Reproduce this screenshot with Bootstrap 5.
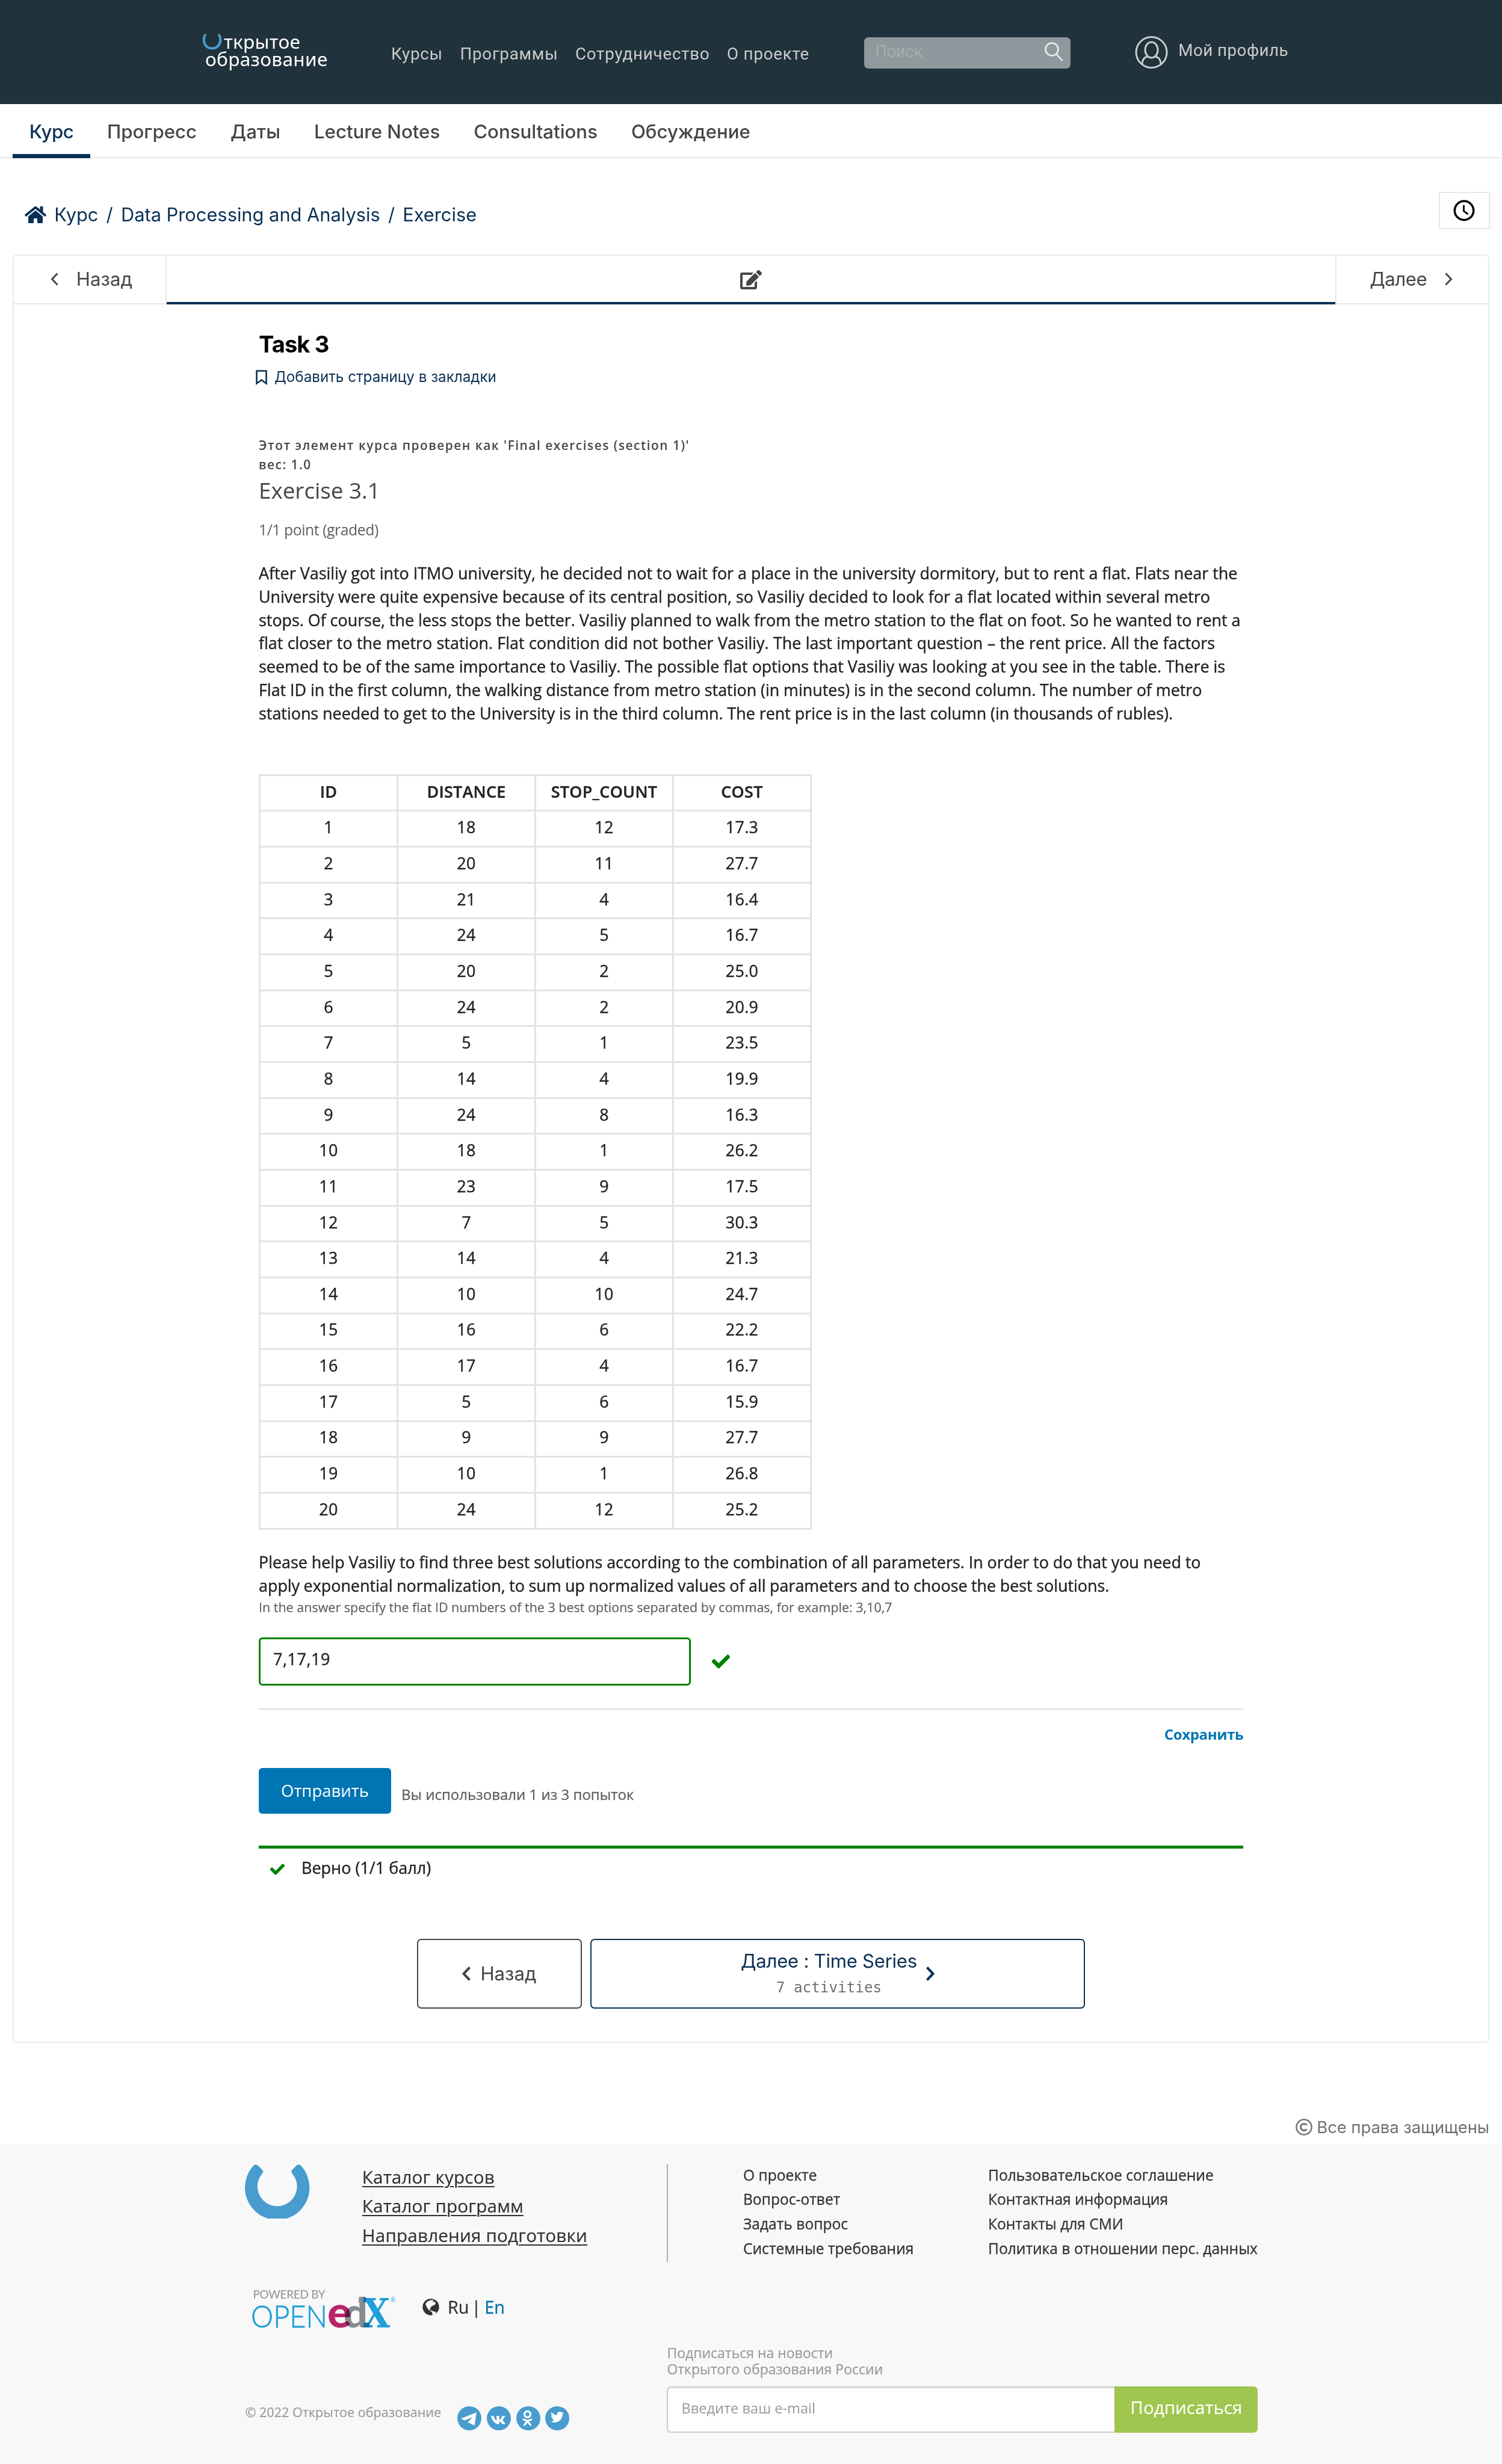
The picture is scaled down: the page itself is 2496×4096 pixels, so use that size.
<!DOCTYPE html>
<html lang="ru">
<head>
<meta charset="utf-8">
<title>Task 3 | Открытое образование</title>
<link rel="stylesheet" href="https://cdn.jsdelivr.net/npm/bootstrap@5.3.0/dist/css/bootstrap.min.css">
<style>
body{width:2496px;height:4096px;overflow:hidden;background:#fff;color:#222;font-family:"Open Sans","Noto Sans",sans-serif;white-space:nowrap}
a{text-decoration:none;color:inherit}
svg{display:block;flex:none}
p,h1,h2,h3{margin:0}
.ui{font-family:Inter,Roboto,sans-serif}
.site-head{height:173.3px;background:#20323c;font-family:Roboto,sans-serif;font-size:27.7px;color:#ccc;line-height:36px;padding-left:337px}
.brand-box{width:212px;margin-top:56px;color:#fff;font:400 31.5px/30px "Noto Sans",sans-serif;letter-spacing:.35px}
.brand-l1{margin-left:3px;margin-top:-2px}
.brand-l2{padding-left:4px;margin-top:-1px}
.head-nav{margin:71.5px 0 0 101px;gap:28.5px;letter-spacing:.8px}
.find-box{margin:62.4px 0 0 auto;width:343px;height:52px;background:#8f989d;border-radius:7px;color:#a6adac;padding:0 12px 5px 18px;letter-spacing:-.5px}
.prof{margin:60px 355px 0 107px;gap:17px;letter-spacing:.5px}
.prof span{margin-top:6px}
.tabs-bar{height:90.2px;border-bottom:2px solid #e7e8e9;padding-left:20.8px;font-size:31.2px;font-weight:500;color:#454545}
.tabs-bar a{height:90.2px;line-height:92px;padding:0 28px}
.tabs-bar a.on{width:129.2px;color:#0a3055;border-bottom:7px solid #0a3055;letter-spacing:-.5px}
.crumb-row{height:159.5px;padding:0 20.5px 0 41px;color:#0a3055;font-size:30.8px;line-height:40px}
.crumbs{margin-top:74px;gap:13.2px}
.clock-box{margin-top:55.5px;width:84.5px;height:62px;border:2px solid #e9e6e4}
.sheet{margin:0 20.8px;height:2973.5px;border:2px solid #eaeaea;border-radius:7px}
.seq{height:81px;font-size:31.2px;color:#454545;line-height:79px}
.seq-end{width:252px;border-bottom:2px solid #eae6e5}
.seq-prev{padding-left:61px;gap:30px}
.seq-next{padding-left:55px;gap:30px;letter-spacing:-.5px}
.seq-mid{border:solid #eae6e5;border-width:0 2px;position:relative}
.seq-mid::after{content:"";position:absolute;left:0;right:0;bottom:0;height:3.5px;background:#0a3055}
.unit{margin-left:407.2px;width:1636.5px}
.unit-h{font-size:38.1px;line-height:50px;font-weight:700;color:#000;margin-top:41px;letter-spacing:-.9px}
.bm{margin:13.500px 0 0 -5px;font-size:24.2px;line-height:34px;color:#0a3055;gap:12px}
.graded{margin-top:80.500px;font-size:20.8px;line-height:31.6px;font-weight:600;color:#454545;letter-spacing:1.54px}
.prob-h{margin-top:3px;font-size:36.8px;line-height:48px;color:#454545;font-weight:400}
.pts{margin-top:25px;font-size:24.7px;line-height:34px;color:#5e5e5e;letter-spacing:-.4px}
.txt{font-size:26.9px;line-height:38.75px;color:#222;-webkit-text-stroke:.4px #222}
.txt-a{margin-top:36px}
.txt-b{margin-top:35.5px}
.ws-p{word-spacing:.37px}
.ws-m{word-spacing:-.12px}
.ws-n{word-spacing:-.5px}
.flats{margin-top:81.400px;width:919px;height:1256px;table-layout:fixed;border-collapse:collapse;font-size:26.9px;line-height:36px;text-align:center;letter-spacing:.3px;-webkit-text-stroke:.4px #222}
.flats td,.flats th{border:3.5px solid #e3e3e3;padding:0 0 5px;text-align:center;height:59.64px;vertical-align:middle}
.flats th{font-weight:600}
.hint{margin-top:2px;font-size:21.5px;line-height:28px;color:#5e5e5e;-webkit-text-stroke:.2px}
.ans-row{margin-top:36.500px;gap:35px}
.ans{width:718px;height:79.5px;border:3.5px solid #008100;border-radius:6px;padding:0 0 7px 21px;font-size:26.9px;letter-spacing:.6px;-webkit-text-stroke:.4px #222}
.rule{margin-top:38px;height:2px;background:#ddd}
.save{margin-top:24px;font-size:24px;line-height:34px;font-weight:700;color:#0075b4;letter-spacing:-.35px}
.send-row{margin-top:39px}
.send{width:220px;height:76.5px;background:#0075b4;color:#fff;border-radius:6px;font-size:27.5px}
.tries{font-size:24px;line-height:34px;color:#5e5e5e;margin:12px 0 0 17px;-webkit-text-stroke:.3px #5e5e5e}
.okline{margin-top:52.5px;height:5px;background:#008100}
.verdict{margin-top:12.7px;padding-left:19px;gap:28px;font-size:27px;line-height:38px;-webkit-text-stroke:.4px #222}
.verdict svg{margin-top:5px}
.pager{margin:99.3px 0 0 263px;gap:14px;font-size:31.2px;line-height:40px;letter-spacing:-.3px}
.pg{height:116px;border:2px solid #454545;border-radius:7px;color:#454545}
.pg-prev{width:274px;gap:16px;letter-spacing:0}
.pg-next{width:822px;border-color:#0a3055;color:#0a3055;gap:15px}
.acts{font:24.3px/36px "DejaVu Sans Mono",monospace;color:#707070;margin-top:5.6px;letter-spacing:0}
.rights{margin:120.9px 21px 8.2px 0;font-size:27.5px;line-height:38px;color:#707070;gap:7px;letter-spacing:-.1px}
.foot{height:532.4px;background:#f8f8f8;padding:34.9px 0 0 407.4px;color:#313131}
.foot-l{width:701px}
.foot-top{height:162px}
.cat{margin:-3.8px 0 0 87px;font-size:29.6px;line-height:48.6px;letter-spacing:.2px;-webkit-text-stroke:.2px #313131}
.cat .cat-a{text-decoration:underline;text-decoration-thickness:2px;text-underline-offset:4px}
.edx{margin:34.400px 0 0 10.600px}
.lang{font-size:28.8px;margin:44.400px 0 15px 34px;line-height:38px;-webkit-text-stroke:.3px}
.lang .lang-ru{margin-left:14px}
.lang .bar{margin:0 6px 0 4px}
.lang .en{color:#0070b0}
.cprow{margin-top:112px;font-size:21.600px;line-height:34px;color:#999;-webkit-text-stroke:.2px}
.cprow>span{margin-bottom:20px}
.soc{gap:8.7px;margin-left:27px}
.foot-r{width:982px}
.foot-links{height:162px;border-left:2px solid #aaa;padding-left:124.6px;font-size:24.6px;line-height:40.6px;-webkit-text-stroke:.3px #313131}
.foot-links>div{margin-top:-2.6px}
.fl1{width:407px}
.news{margin-top:137.500px;font-size:23px;line-height:27px;color:#999;-webkit-text-stroke:.2px}
.subf{margin-top:15.4px;height:76.5px}
.mail{width:744px;border:2px solid #ccc;border-right:0;border-radius:7px 0 0 7px;background:#fff;box-shadow:inset 0 2px 3px #0001;padding:0 0 4px 22px;color:#999;font-size:23.6px}
.subb{width:238px;background:#9fc64e;color:#fff;border-radius:0 7px 7px 0;font-size:29.6px;padding-bottom:7px;-webkit-text-stroke:.2px}
</style>
</head>
<body>
<header class="site-head d-flex align-items-start">
  <div class="brand-box">
    <div class="d-flex align-items-start"><svg width="32" height="27" viewBox="0 0 32 27"><path d="M4.500 1C-2 12 4 24.500 15.500 24.500S33 12 26.500 1" fill="none" stroke="#489ccf" stroke-width="4.200"/></svg><span class="brand-l1">ткрытое</span></div>
    <div class="brand-l2">образование</div>
  </div>
  <nav class="head-nav d-flex"><a>Курсы</a><a>Программы</a><a>Сотрудничество</a><a>О проекте</a></nav>
  <div class="find-box d-flex justify-content-between align-items-center"><span>Поиск</span><svg width="32" height="32" viewBox="0 0 32 32" fill="none" stroke="#eee" stroke-width="2.600"><circle cx="13" cy="12" r="10.500"/><path d="M20.500 20l10 11"/></svg></div>
  <div class="prof d-flex"><svg width="55" height="55" viewBox="0 0 55 55" fill="none" stroke="#ccc" stroke-width="3"><circle cx="27.500" cy="27" r="25.500"/><ellipse cx="27.500" cy="23" rx="10.500" ry="13"/><path d="M12 47c0-8 4-12 9-13M43 47c0-8-4-12-9-13"/></svg><span>Мой профиль</span></div>
</header>
<nav class="tabs-bar ui d-flex"><a class="on">Курс</a><a>Прогресс</a><a>Даты</a><a>Lecture Notes</a><a>Consultations</a><a>Обсуждение</a></nav>
<div class="crumb-row ui d-flex justify-content-between align-items-start">
  <div class="crumbs d-flex"><svg width="36" height="40" viewBox="0 0 576 512" fill="#0a3055"><path d="M280.370 148.260L96 300.110V464a16 16 0 0 0 16 16l112.060-.290a16 16 0 0 0 15.920-16V368a16 16 0 0 1 16-16h64a16 16 0 0 1 16 16v95.640a16 16 0 0 0 16 16.050L464 480a16 16 0 0 0 16-16V300L295.670 148.260a12.190 12.190 0 0 0-15.300 0zM571.600 251.470L488 182.560V44.050a12 12 0 0 0-12-12h-56a12 12 0 0 0-12 12v72.610L318.470 43a48 48 0 0 0-61 0L4.340 251.470a12 12 0 0 0-1.600 16.900l25.500 31A12 12 0 0 0 45.150 301l235.220-193.740a12.190 12.190 0 0 1 15.300 0L530.900 301a12 12 0 0 0 16.900-1.600l25.500-31a12 12 0 0 0-1.700-16.930z"/></svg><a>Курс</a><span>/</span><a>Data Processing and Analysis</a><span>/</span><a>Exercise</a></div>
  <div class="clock-box d-flex align-items-center justify-content-center"><svg width="36" height="36" viewBox="0 0 36 36" fill="none" stroke="#000" stroke-width="3.500"><circle cx="18" cy="18" r="15.700"/><path d="M17.500 9v10l7 5" stroke-width="2.800"/></svg></div>
</div>
<main class="sheet">
  <div class="seq ui d-flex">
    <div class="seq-end seq-prev d-flex align-items-center"><svg width="13" height="22" viewBox="0 0 13 22" fill="none" stroke="#454545" stroke-width="3"><path d="M11.500 1.500L2.500 11l9 9.500"/></svg><span>Назад</span></div>
    <div class="seq-mid flex-fill d-flex align-items-center justify-content-center"><svg width="36" height="32" viewBox="0 0 576 512" fill="#454545"><path d="M402.600 83.200l90.200 90.200c3.800 3.800 3.800 10 0 13.800L274.400 405.600l-92.800 10.300c-12.400 1.400-22.900-9.100-21.500-21.500l10.300-92.800L388.800 83.200c3.800-3.800 10-3.800 13.800 0zm162-22.900l-48.800-48.800c-15.200-15.200-39.900-15.200-55.200 0l-35.400 35.400c-3.800 3.800-3.800 10 0 13.800l90.200 90.200c3.800 3.800 10 3.800 13.800 0l35.400-35.400c15.200-15.300 15.200-40 0-55.200zM384 346.200V448H64V128h229.800c3.200 0 6.200-1.300 8.500-3.500l40-40c7.600-7.600 2.200-20.500-8.500-20.500H48C21.500 64 0 85.500 0 112v352c0 26.500 21.500 48 48 48h352c26.500 0 48-21.500 48-48V306.200c0-10.700-12.900-16-20.500-8.500l-40 40c-2.200 2.300-3.500 5.300-3.500 8.500z"/></svg></div>
    <div class="seq-end seq-next d-flex align-items-center"><span>Далее</span><svg width="13" height="22" viewBox="0 0 13 22" fill="none" stroke="#454545" stroke-width="3"><path d="M1.500 1.500l9 9.500-9 9.500"/></svg></div>
  </div>
  <article class="unit">
    <h1 class="unit-h ui">Task 3</h1>
    <div class="bm ui d-flex align-items-center"><svg width="19" height="25" viewBox="0 0 19 25" fill="none" stroke="#0a3055" stroke-width="2.600"><path d="M1.500 1.500h16v21l-8-6-8 6z"/></svg><span>Добавить страницу в закладки</span></div>
    <div class="graded">Этот элемент курса проверен как 'Final exercises (section 1)'<br>вес: 1.0</div>
    <h3 class="prob-h">Exercise 3.1</h3>
    <div class="pts">1/1 point (graded)</div>
    <p class="txt txt-a">After Vasiliy got into ITMO university, he decided not to wait for a place in the university dormitory, but to rent a flat. Flats near the<br>University were quite expensive because of its central position, so Vasiliy decided to look for a flat located within several metro<br><span class="ws-m">stops. Of course, the less stops the better. Vasiliy planned to walk from the metro station to the flat on foot. So he wanted to rent a</span><br><span class="ws-p">flat closer to the metro station. Flat condition did not bother Vasiliy. The last important question – the rent price. All the factors</span><br>seemed to be of the same importance to Vasiliy. The possible flat options that Vasiliy was looking at you see in the table. There is<br><span class="ws-m">Flat ID in the first column, the walking distance from metro station (in minutes) is in the second column. The number of metro</span><br><span class="ws-m">stations needed to get to the University is in the third column. The rent price is in the last column (in thousands of rubles).</span></p>
    <table class="flats">
      <tr><th>ID</th><th>DISTANCE</th><th>STOP_COUNT</th><th>COST</th></tr>
      <tr><td>1</td><td>18</td><td>12</td><td>17.3</td></tr>
      <tr><td>2</td><td>20</td><td>11</td><td>27.7</td></tr>
      <tr><td>3</td><td>21</td><td>4</td><td>16.4</td></tr>
      <tr><td>4</td><td>24</td><td>5</td><td>16.7</td></tr>
      <tr><td>5</td><td>20</td><td>2</td><td>25.0</td></tr>
      <tr><td>6</td><td>24</td><td>2</td><td>20.9</td></tr>
      <tr><td>7</td><td>5</td><td>1</td><td>23.5</td></tr>
      <tr><td>8</td><td>14</td><td>4</td><td>19.9</td></tr>
      <tr><td>9</td><td>24</td><td>8</td><td>16.3</td></tr>
      <tr><td>10</td><td>18</td><td>1</td><td>26.2</td></tr>
      <tr><td>11</td><td>23</td><td>9</td><td>17.5</td></tr>
      <tr><td>12</td><td>7</td><td>5</td><td>30.3</td></tr>
      <tr><td>13</td><td>14</td><td>4</td><td>21.3</td></tr>
      <tr><td>14</td><td>10</td><td>10</td><td>24.7</td></tr>
      <tr><td>15</td><td>16</td><td>6</td><td>22.2</td></tr>
      <tr><td>16</td><td>17</td><td>4</td><td>16.7</td></tr>
      <tr><td>17</td><td>5</td><td>6</td><td>15.9</td></tr>
      <tr><td>18</td><td>9</td><td>9</td><td>27.7</td></tr>
      <tr><td>19</td><td>10</td><td>1</td><td>26.8</td></tr>
      <tr><td>20</td><td>24</td><td>12</td><td>25.2</td></tr>
    </table>
    <p class="txt txt-b"><span class="ws-m">Please help Vasiliy to find three best solutions according to the combination of all parameters. In order to do that you need to</span><br><span class="ws-n">apply exponential normalization, to sum up normalized values of all parameters and to choose the best solutions.</span></p>
    <div class="hint">In the answer specify the flat ID numbers of the 3 best options separated by commas, for example: 3,10,7</div>
    <div class="ans-row d-flex align-items-center"><div class="ans d-flex align-items-center">7,17,19</div><svg width="30" height="24" viewBox="0 65 512 382" fill="#008100"><path d="M173.898 439.404l-166.400-166.400c-9.997-9.997-9.997-26.206 0-36.204l36.203-36.204c9.997-9.998 26.207-9.998 36.204 0L192 312.690 432.095 72.596c9.997-9.997 26.207-9.997 36.204 0l36.203 36.204c9.997 9.997 9.997 26.206 0 36.204l-294.400 294.401c-9.998 9.997-26.207 9.997-36.204-.001z" stroke="#008100" stroke-width="16"/></svg></div>
    <div class="rule"></div>
    <div class="save text-end">Сохранить</div>
    <div class="send-row d-flex align-items-center"><div class="send d-flex align-items-center justify-content-center">Отправить</div><span class="tries">Вы использовали 1 из 3 попыток</span></div>
    <div class="okline"></div>
    <div class="verdict d-flex align-items-center"><svg width="24" height="19" viewBox="0 65 512 382" fill="#008100"><path d="M173.898 439.404l-166.400-166.400c-9.997-9.997-9.997-26.206 0-36.204l36.203-36.204c9.997-9.998 26.207-9.998 36.204 0L192 312.690 432.095 72.596c9.997-9.997 26.207-9.997 36.204 0l36.203 36.204c9.997 9.997 9.997 26.206 0 36.204l-294.400 294.401c-9.998 9.997-26.207 9.997-36.204-.001z" stroke="#008100" stroke-width="16"/></svg><span>Верно (1/1 балл)</span></div>
    <div class="pager ui d-flex">
      <a class="pg pg-prev d-flex align-items-center justify-content-center"><svg width="14" height="24" viewBox="0 0 14 24" fill="none" stroke="#454545" stroke-width="4"><path d="M12.500 1.500L2.500 12l10 10.500"/></svg><span>Назад</span></a>
      <a class="pg pg-next d-flex align-items-center justify-content-center"><span class="text-center"><span class="d-block">Далее : Time Series</span><span class="acts d-block">7 activities</span></span><svg width="14" height="24" viewBox="0 0 14 24" fill="none" stroke="#0a3055" stroke-width="4"><path d="M1.500 1.500L11.500 12l-10 10.500"/></svg></a>
    </div>
  </article>
</main>
<div class="rights ui d-flex justify-content-end align-items-center"><svg width="28" height="28" viewBox="0 0 28 28" fill="none" stroke="#707070"><circle cx="14" cy="14" r="12.600" stroke-width="2.400"/><path d="M18.500 10.500a5.600 5.600 0 1 0 0 7" stroke-width="3"/></svg><span>Все права защищены</span></div>
<footer class="foot d-flex align-items-start">
  <div class="foot-l">
    <div class="foot-top d-flex align-items-start"><svg width="107.400" height="90" viewBox="0 0 124 104"><path d="M16 3Q20-2 25 2L33 10Q37 14 32 19A38 38 0 1 0 92 19Q87 14 91 10L99 2Q104-2 108 3A62 62 0 1 1 16 3z" fill="#489ccf"/></svg>
      <div class="cat"><a class="cat-a">Каталог курсов</a><br><a class="cat-a">Каталог программ</a><br><a class="cat-a">Направления подготовки</a></div></div>
    <div class="d-flex align-items-center">
      <svg class="edx" width="250" height="86" viewBox="0 -10 250 86"><g font-family="Lato, sans-serif"><text x="2.500" y="15.500" font-size="18.800" fill="#8f9194" textLength="120">POWERED BY</text><text x="-1" y="63.500" font-size="51.800" font-weight="300" fill="#1f9fdc" stroke="#1f9fdc" stroke-width=".8" textLength="127" lengthAdjust="spacingAndGlyphs">OPEN</text><text x="126" y="63.500" font-size="73" font-weight="900" fill="#b9246a" textLength="40" lengthAdjust="spacingAndGlyphs">e</text><text x="153" y="63.500" font-size="68" font-weight="900" fill="#8d9093" style="mix-blend-mode:multiply" textLength="40" lengthAdjust="spacingAndGlyphs">d</text></g><path d="M178 14.300h12v8h-12z" fill="#8d9093"/><text x="185" y="64" font-family="DejaVu Serif" font-weight="700" font-size="68" fill="#1f9fdc" textLength="45" lengthAdjust="spacingAndGlyphs">X</text><path d="M185.700 14.300h4.800v8h-4.800zM185.700 56h10v8h-10z" fill="#1a6ca8"/><text x="231" y="22" font-size="10" fill="#1f9fdc">®</text></svg>
      <div class="lang d-flex align-items-center"><svg width="28" height="28" viewBox="0 0 28 28"><circle cx="14" cy="14" r="13.700" fill="#313131"/><path d="M5 9L8 5l6-2.500 5 0-2 2.500 1 1 2-1.500 2 3.500-1 2-5 2.500-2.500 2 0 3-2-.5 1 2 4 1.500 3.500 1 3 1-1.500 3.500-5 1.500-.5-5-6-4L6.500 13z" fill="#f8f8f8"/></svg><span class="lang-ru">Ru</span><span class="bar">|</span><span class="en">En</span></div>
    </div>
    <div class="cprow d-flex align-items-center"><span>© 2022 Открытое образование</span>
      <div class="soc d-flex">
        <svg width="40" height="40" viewBox="0 0 40 40"><circle cx="20" cy="20" r="20" fill="#489ccf"/><path d="M5.800 20.500L31.700 10.300 28.700 32l-11.500-5.300L25.500 18 12.500 23.500z" fill="#fff"/></svg>
        <svg width="40" height="40" viewBox="0 0 40 40"><circle cx="20" cy="20" r="20" fill="#489ccf"/><path transform="translate(6.200 11.700) scale(.0435)" fill="#fff" d="M545 117.700c3.700-12.500 0-21.700-17.800-21.700h-58.900c-15 0-21.900 7.900-25.600 16.700 0 0-30 73.100-72.400 120.500-13.700 13.700-20 18.100-27.500 18.100-3.700 0-9.400-4.400-9.400-16.900V117.700c0-15-4.200-21.700-16.600-21.700h-92.600c-9.400 0-15 7-15 13.500 0 14.200 21.200 17.500 23.400 57.500v86.800c0 19-3.400 22.500-10.900 22.500-20 0-68.600-73.400-97.400-157.400-5.800-16.300-11.500-22.900-26.600-22.900H38.800c-16.800 0-20.200 7.900-20.200 16.700 0 15.600 20 93.100 93.100 195.500C160.400 378.100 229 416 291.400 416c37.500 0 42.100-8.400 42.100-22.900 0-66.800-3.400-73.100 15.400-73.100 8.700 0 23.700 4.400 58.700 38.100 40 40 46.600 57.900 69 57.900h58.900c16.800 0 25.300-8.400 20.400-25-11.200-34.900-86.900-106.700-90.300-111.500-8.700-11.200-6.200-16.200 0-26.200.1-.1 72-101.300 79.400-135.600z"/></svg>
        <svg width="40" height="40" viewBox="0 0 40 40"><circle cx="20" cy="20" r="20" fill="#489ccf"/><g fill="none" stroke="#fff" stroke-width="3.200" stroke-linecap="round"><circle cx="18.500" cy="13.300" r="5"/><path d="M12 22q6.500 4 13 0M18.500 25l-5 6M18.500 25l5 6"/></g></svg>
        <svg width="40" height="40" viewBox="0 0 40 40"><circle cx="20" cy="20" r="20" fill="#489ccf"/><path transform="translate(9 7) scale(.043)" fill="#fff" d="M459.370 151.716c.325 4.548.325 9.097.325 13.645 0 138.720-105.583 298.558-298.558 298.558-59.452 0-114.680-17.219-161.137-47.106 8.447.974 16.568 1.299 25.340 1.299 49.055 0 94.213-16.568 130.274-44.832-46.132-.975-84.792-31.188-98.112-72.772 6.498.974 12.995 1.624 19.818 1.624 9.421 0 18.843-1.300 27.614-3.573-48.081-9.747-84.143-51.980-84.143-102.985v-1.299c13.969 7.797 30.214 12.670 47.431 13.319-28.264-18.843-46.781-51.005-46.781-87.391 0-19.492 5.197-37.360 14.294-52.954 51.655 63.675 129.300 105.258 216.365 109.807-1.624-7.797-2.599-15.918-2.599-24.040 0-57.828 46.782-104.934 104.934-104.934 30.213 0 57.502 12.670 76.670 33.137 23.715-4.548 46.456-13.320 66.599-25.340-7.798 24.366-24.366 44.833-46.132 57.827 21.117-2.273 41.584-8.122 60.426-16.243-14.292 20.791-32.161 39.308-52.628 54.253z"/></svg>
      </div></div>
  </div>
  <div class="foot-r">
    <div class="foot-links d-flex"><div class="fl1"><a>О проекте</a><br><a>Вопрос-ответ</a><br><a>Задать вопрос</a><br><a>Системные требования</a></div><div><a>Пользовательское соглашение</a><br><a>Контактная информация</a><br><a>Контакты для СМИ</a><br><a>Политика в отношении перс. данных</a></div></div>
    <div class="news">Подписаться на новости<br>Открытого образования России</div>
    <div class="subf d-flex"><div class="mail d-flex align-items-center">Введите ваш e-mail</div><div class="subb d-flex align-items-center justify-content-center">Подписаться</div></div>
  </div>
</footer>
<script src="https://cdn.jsdelivr.net/npm/bootstrap@5.3.0/dist/js/bootstrap.bundle.min.js"></script>
</body>
</html>
